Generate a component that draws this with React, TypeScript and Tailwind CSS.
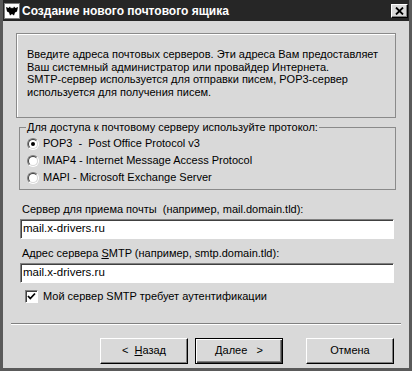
import React from "react";

const font = { fontFamily: '"Liberation Sans", Arial, sans-serif' };

const AppIcon = () => (
  <svg width="16" height="16" viewBox="0 0 16 16" className="shrink-0">
    <rect x="0" y="0" width="16" height="16" fill="#fff" />
    <rect x="0.5" y="0.5" width="15" height="15" fill="none" stroke="#000" strokeDasharray="1 1" />
    <path
      d="M2 4 L4.5 5 L6 3.5 L7 5.5 L8 4.5 L9 5.5 L10 3.5 L11.5 5 L14 4 L13 8.5 L11 9.5 L10 12.5 L8 11 L6 12.5 L5 9.5 L3 8.5 Z"
      fill="#000"
    />
  </svg>
);

const CloseButton = () => (
  <div className="w-[17px] h-[14px] bg-[#d9d9d9] border border-t-white border-l-white border-b-black border-r-black shadow-[inset_-1px_-1px_0_#808080] flex items-center justify-center">
    <svg width="9" height="8" viewBox="0 0 9 8">
      <path d="M1 0.5 L8 7.5 M8 0.5 L1 7.5" stroke="#000" strokeWidth="1.8" />
    </svg>
  </div>
);

const Radio = ({ checked }: { checked?: boolean }) => (
  <div className="w-[12px] h-[12px] rounded-full border border-[#808080] border-b-white border-r-white shrink-0">
    <div className="w-full h-full rounded-full border border-[#404040] border-b-[#d9d9d9] border-r-[#d9d9d9] bg-white flex items-center justify-center">
      {checked && <div className="w-[4px] h-[4px] rounded-full bg-black" />}
    </div>
  </div>
);

const Checkbox = () => (
  <div className="w-[13px] h-[13px] bg-white border border-t-[#808080] border-l-[#808080] border-b-white border-r-white shadow-[inset_1px_1px_0_#404040] flex items-center justify-center shrink-0">
    <svg width="9" height="9" viewBox="0 0 9 9">
      <path d="M1 4 L3.3 6.5 L8 1.5" stroke="#000" strokeWidth="1.8" fill="none" />
    </svg>
  </div>
);

const Field = ({ value }: { value: string }) => (
  <div className="h-[20px] bg-white border border-t-[#808080] border-l-[#808080] border-b-white border-r-white shadow-[inset_1px_1px_0_#404040] flex items-center pl-[2px] text-[11.5px] text-black">
    {value}
  </div>
);

const Button = ({ children, isDefault }: { children: React.ReactNode; isDefault?: boolean }) => (
  <div
    className={
      "w-[88px] h-[26px] flex items-center justify-center bg-[#d9d9d9] text-[11px] text-black " +
      (isDefault
        ? "border border-black shadow-[inset_1px_1px_0_#fff,inset_-1px_-1px_0_#404040,inset_-2px_-2px_0_#808080]"
        : "border border-t-white border-l-white border-b-black border-r-black shadow-[inset_-1px_-1px_0_#808080]")
    }
  >
    {children}
  </div>
);

export default function App() {
  return (
    <div
      style={font}
      className="w-[412px] h-[371px] bg-[#d9d9d9] border-[3px] border-t-0 border-[#5a5a5a] flex flex-col text-black"
    >
      <div className="h-[21px] bg-[#262626] flex items-center pl-[1px] pr-[1px] shrink-0">
        <AppIcon />
        <span className="ml-[2px] text-white font-bold text-[12px]">
          Создание нового почтового ящика
        </span>
        <div className="ml-auto">
          <CloseButton />
        </div>
      </div>

      <div className="px-[13px] flex flex-col text-[11px]">
        <div className="mt-[12px] h-[85px] border border-[#8a8a8a] shadow-[inset_1px_1px_0_#fff] pl-[10px] pt-[14px] leading-[12.7px]">
          <p>Введите адреса почтовых серверов. Эти адреса Вам предоставляет</p>
          <p>Ваш системный администратор или провайдер Интернета.</p>
          <p>SMTP-сервер используется для отправки писем, POP3-сервер</p>
          <p>используется для получения писем.</p>
        </div>

        <fieldset className="mt-[3px] ml-[3px] h-[69px] border border-[#8a8a8a] px-[7px] pt-[3px]">
          <legend className="px-[1px] -ml-[1px] leading-[13px]">
            Для доступа к почтовому серверу используйте протокол:
          </legend>
          <div className="flex flex-col gap-[4px]">
            <label className="flex items-center gap-[4px] h-[13px]">
              <Radio checked />
              <span>POP3 &nbsp;- &nbsp;Post Office Protocol v3</span>
            </label>
            <label className="flex items-center gap-[4px] h-[13px]">
              <Radio />
              <span>IMAP4 - Internet Message Access Protocol</span>
            </label>
            <label className="flex items-center gap-[4px] h-[13px]">
              <Radio />
              <span>MAPI - Microsoft Exchange Server</span>
            </label>
          </div>
        </fieldset>

        <div className="mt-[13px] ml-[6px] leading-[13px]">
          Сервер для приема почты &nbsp;(например, mail.domain.tld):
        </div>
        <div className="mt-[3px] ml-[4px] mr-[2px]">
          <Field value="mail.x-drivers.ru" />
        </div>
        <div className="mt-[8px] ml-[6px] leading-[13px]">
          Адрес сервера <span className="underline">S</span>MTP (например, smtp.domain.tld):
        </div>
        <div className="mt-[3px] ml-[4px] mr-[2px]">
          <Field value="mail.x-drivers.ru" />
        </div>
        <label className="mt-[5px] ml-[9px] flex items-center gap-[5px]">
          <Checkbox />
          <span>Мой сервер SMTP требует аутентификации</span>
        </label>
      </div>

      <div className="mt-[18px] mx-[8px] border-t border-t-[#808080] border-b border-b-white" />

      <div className="mt-[13px] flex pl-[97px]">
        <Button>
          <span>&lt;&nbsp;&nbsp;<span className="underline">Н</span>азад</span>
        </Button>
        <div className="ml-[7px]">
          <Button isDefault>
            <span><span className="underline">Д</span>алее&nbsp;&nbsp;&nbsp;&gt;</span>
          </Button>
        </div>
        <div className="ml-[23px]">
          <Button>Отмена</Button>
        </div>
      </div>
    </div>
  );
}
